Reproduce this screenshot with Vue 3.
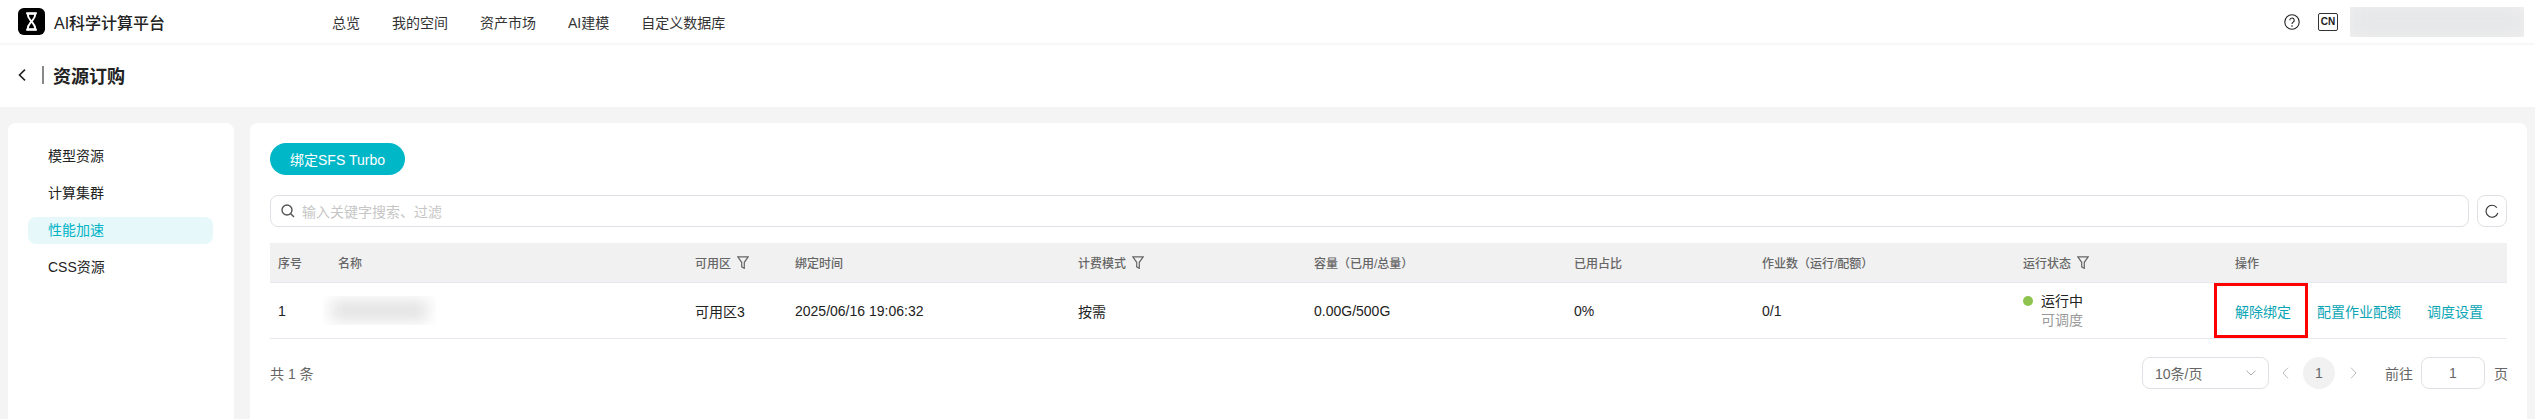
<script setup>
const navItems = ["总览", "我的空间", "资产市场", "AI建模", "自定义数据库"];
const sideItems = ["模型资源", "计算集群", "性能加速", "CSS资源"];
const columns = [
  { label: "序号" },
  { label: "名称" },
  { label: "可用区", filter: true },
  { label: "绑定时间" },
  { label: "计费模式", filter: true },
  { label: "容量（已用/总量）" },
  { label: "已用占比" },
  { label: "作业数（运行/配额）" },
  { label: "运行状态", filter: true },
  { label: "操作" },
];
</script>

<template>
  <div class="page">
    <header class="topbar">
      <div class="brand">
        <svg class="logo" viewBox="0 0 28 28">
          <rect width="28" height="28" rx="6" fill="#000" />
          <path d="M8.5 5.5h11M8.5 22.5h11" stroke="#fff" stroke-width="2.2" fill="none" />
          <path d="M10 6c0 4 2 5.500 4 8 2 2.500 4 4 4 8h-8c0-4 2-5.500 4-8 2-2.500 4-4 4-8z" stroke="#fff" stroke-width="2" fill="none" />
        </svg>
        <span class="brandName">AI科学计算平台</span>
      </div>
      <nav class="nav">
        <span v-for="item in navItems" :key="item">{{ item }}</span>
      </nav>
      <div class="topRight">
        <svg class="help" viewBox="0 0 16 16">
          <circle cx="8" cy="8" r="7.2" stroke="#222" fill="none" stroke-width="1.1" />
          <path d="M5.800 6.300a2.200 2.200 0 1 1 3.400 1.800c-.8.500-1.200 1-1.200 1.900" stroke="#222" fill="none" stroke-width="1.100" />
          <circle cx="8" cy="12" r=".8" fill="#222" />
        </svg>
        <span class="lang">CN</span>
        <div class="blurBox userBlur"><i></i></div>
      </div>
    </header>

    <div class="titleRow">
      <svg class="back" viewBox="0 0 8 12">
        <path d="M7 .7 1.500 6 7 11.300" stroke="#222" stroke-width="1.600" fill="none" />
      </svg>
      <span class="titleLine"></span>
      <h1>资源订购</h1>
    </div>

    <div class="content">
      <aside class="side">
        <div
          v-for="item in sideItems"
          :key="item"
          class="sideItem"
          :class="{ active: item === '性能加速' }"
        >
          {{ item }}
        </div>
      </aside>

      <main class="main">
        <button class="bindBtn">绑定SFS Turbo</button>

        <div class="toolbar">
          <div class="search">
            <svg class="searchIcon" viewBox="0 0 14 14">
              <circle cx="6" cy="6" r="5" stroke="#555" stroke-width="1.400" fill="none" />
              <path d="M9.500 9.500 13 13" stroke="#555" stroke-width="1.400" />
            </svg>
            <span>输入关键字搜索、过滤</span>
          </div>
          <div class="refresh">
            <svg viewBox="0 0 14 14">
              <path d="M11.800 3.600A6 6 0 1 0 12.800 9" stroke="#333" stroke-width="1.100" fill="none" />
            </svg>
          </div>
        </div>

        <div class="table">
          <div class="row head">
            <div v-for="col in columns" :key="col.label" class="cell">
              {{ col.label }}
              <svg v-if="col.filter" class="filter" viewBox="0 0 12 13">
                <path d="M.8.8h10.400L7.300 6.300v6l-2.600-1.500V6.300z" stroke="#666" stroke-width="1.200" fill="none" />
              </svg>
            </div>
          </div>
          <div class="row body">
            <div class="cell">1</div>
            <div class="cell nameCell"><div class="blurBox nameBlur"><i></i></div></div>
            <div class="cell">可用区3</div>
            <div class="cell">2025/06/16 19:06:32</div>
            <div class="cell">按需</div>
            <div class="cell">0.00G/500G</div>
            <div class="cell">0%</div>
            <div class="cell">0/1</div>
            <div class="cell status">
              <div class="statusMain"><span class="dot"></span>运行中</div>
              <div class="statusSub">可调度</div>
            </div>
            <div class="cell actions">
              <a class="unbind">解除绑定</a>
              <a>配置作业配额</a>
              <a>调度设置</a>
            </div>
          </div>
        </div>

        <div class="footer">
          <span class="total">共 1 条</span>
          <div class="pager">
            <div class="sizeSelect">
              <span>10条/页</span>
              <svg viewBox="0 0 10 6"><path d="M.5.700 5 5 9.500.700" stroke="#aaa" fill="none" /></svg>
            </div>
            <svg class="pageArrow prev" viewBox="0 0 7 12"><path d="M6 .7 1 6l5 5.300" stroke="#bbb" fill="none" /></svg>
            <span class="pageNum">1</span>
            <svg class="pageArrow next" viewBox="0 0 7 12"><path d="M1 .7 6 6l-5 5.300" stroke="#bbb" fill="none" /></svg>
            <span class="goto">前往</span>
            <span class="pageInput">1</span>
            <span class="pageUnit">页</span>
          </div>
        </div>
      </main>
    </div>
  </div>
</template>

<style>
html,
body {
  margin: 0;
  overflow: hidden;
}
</style>

<style scoped>
.page {
  height: 100vh;
  display: flex;
  flex-direction: column;
  background: #f4f4f4;
  color: #222;
  font-family: "Liberation Sans", "Noto Sans CJK SC", sans-serif;
  font-size: 14px;
  overflow: hidden;
}
.topbar {
  height: 43px;
  flex-shrink: 0;
  display: flex;
  align-items: center;
  padding-left: 18px;
  background: #fff;
  box-shadow: 0 1px 3px rgba(0, 0, 0, 0.06);
  position: relative;
}
.brand {
  width: 314px;
  display: flex;
  align-items: center;
}
.logo {
  width: 27px;
  height: 27px;
  margin-right: 9px;
}
.brandName {
  font-size: 16px;
  font-weight: 500;
  color: #222;
}
.nav {
  display: flex;
  gap: 32px;
  color: #333;
}
.topRight {
  margin-left: auto;
  display: flex;
  align-items: center;
  padding-right: 11px;
}
.help {
  width: 16px;
  height: 16px;
  margin-right: 18px;
}
.lang {
  width: 20px;
  height: 18px;
  box-sizing: border-box;
  border: 1px solid #333;
  border-radius: 2px;
  font-size: 10px;
  font-weight: 700;
  line-height: 16px;
  text-align: center;
  margin-right: 12px;
}
.blurBox {
  overflow: hidden;
  background: #fff;
}
.blurBox i {
  display: block;
  height: 100%;
  background: #e0e0e1;
  filter: blur(8px);
}
.userBlur {
  width: 174px;
  height: 30px;
  background: #f0f0f1;
}
.userBlur i {
  background: #e6e7e8;
}
.titleRow {
  height: 64px;
  flex-shrink: 0;
  display: flex;
  align-items: center;
  padding-left: 18px;
  background: #fff;
}
.back {
  width: 8px;
  height: 12px;
}
.titleLine {
  width: 2px;
  height: 18px;
  margin: 0 9px 0 16px;
  background: #888;
}
.titleRow h1 {
  margin: 0;
  font-size: 18px;
  font-weight: 700;
  color: #222;
}
.content {
  flex: 1;
  display: flex;
  gap: 16px;
  padding: 16px 8px 0;
  min-height: 0;
}
.side {
  width: 226px;
  flex-shrink: 0;
  box-sizing: border-box;
  padding: 20px 21px 0 20px;
  background: #fff;
  border-radius: 8px 8px 0 0;
}
.sideItem {
  height: 27px;
  line-height: 27px;
  padding-left: 20px;
  margin-bottom: 10px;
  border-radius: 8px;
}
.sideItem.active {
  background: #e6f8fa;
  color: #00b4c6;
}
.main {
  flex: 1;
  min-width: 0;
  box-sizing: border-box;
  padding: 20px;
  background: #fff;
  border-radius: 8px 8px 0 0;
}
.bindBtn {
  display: block;
  width: 135px;
  height: 32px;
  padding: 0;
  border: none;
  border-radius: 16px;
  background: #00b7c8;
  color: #fff;
  font: inherit;
}
.toolbar {
  display: flex;
  gap: 8px;
  margin-top: 20px;
}
.search {
  flex: 1;
  height: 32px;
  box-sizing: border-box;
  display: flex;
  align-items: center;
  padding-left: 10px;
  border: 1px solid #e0e0e6;
  border-radius: 8px;
  color: #c6c6c6;
}
.searchIcon {
  width: 14px;
  height: 14px;
  margin-right: 7px;
}
.refresh {
  width: 30px;
  height: 32px;
  box-sizing: border-box;
  display: flex;
  align-items: center;
  justify-content: center;
  border: 1px solid #e0e0e6;
  border-radius: 8px;
}
.refresh svg {
  width: 14px;
  height: 14px;
}
.table {
  margin-top: 16px;
}
.row {
  display: grid;
  grid-template-columns: 60px 357px 100px 283px 236px 260px 188px 261px 212px 280px;
  border-bottom: 1px solid #e8e8f0;
  box-sizing: border-box;
}
.head {
  height: 40px;
  background: #f1f1f1;
  color: #666;
  font-size: 12px;
  font-weight: 500;
}
.body {
  height: 56px;
}
.cell {
  display: flex;
  align-items: center;
  padding-left: 8px;
  white-space: nowrap;
}
.filter {
  width: 12px;
  height: 13px;
  margin-left: 6px;
}
.nameCell {
  padding-left: 0;
}
.nameBlur {
  width: 113px;
  height: 29px;
  margin-left: -7px;
}
.nameBlur i {
  margin: 5px 8px;
  height: 19px;
}
.status {
  flex-direction: column;
  align-items: flex-start;
  justify-content: center;
  line-height: 19px;
}
.statusMain {
  display: flex;
  align-items: center;
}
.dot {
  width: 10px;
  height: 10px;
  margin-right: 8px;
  border-radius: 50%;
  background: #8fc34f;
}
.statusSub {
  padding-left: 18px;
  color: #999;
}
.actions {
  gap: 26px;
  color: #0aa5b5;
}
.unbind {
  position: relative;
}
.unbind::after {
  content: "";
  position: absolute;
  left: -21px;
  right: -17px;
  top: -18px;
  bottom: -17px;
  border: 3px solid #f00;
}
.footer {
  display: flex;
  align-items: center;
  justify-content: space-between;
  margin-top: 18px;
  height: 32px;
}
.total {
  color: #666;
}
.pager {
  display: flex;
  align-items: center;
  margin-right: -1px;
  color: #666;
}
.sizeSelect {
  width: 127px;
  height: 32px;
  box-sizing: border-box;
  display: flex;
  align-items: center;
  justify-content: space-between;
  padding: 0 12px;
  border: 1px solid #e0e0e6;
  border-radius: 8px;
}
.sizeSelect svg {
  width: 10px;
  height: 6px;
}
.pageArrow {
  width: 7px;
  height: 12px;
}
.prev {
  margin: 0 14px 0 13px;
}
.next {
  margin: 0 28px 0 15px;
}
.pageNum {
  width: 32px;
  height: 32px;
  line-height: 32px;
  text-align: center;
  border-radius: 50%;
  background: #f1f1f1;
}
.pageInput {
  width: 64px;
  height: 32px;
  box-sizing: border-box;
  line-height: 30px;
  text-align: center;
  margin: 0 9px 0 8px;
  border: 1px solid #e0e0e6;
  border-radius: 8px;
}
</style>
